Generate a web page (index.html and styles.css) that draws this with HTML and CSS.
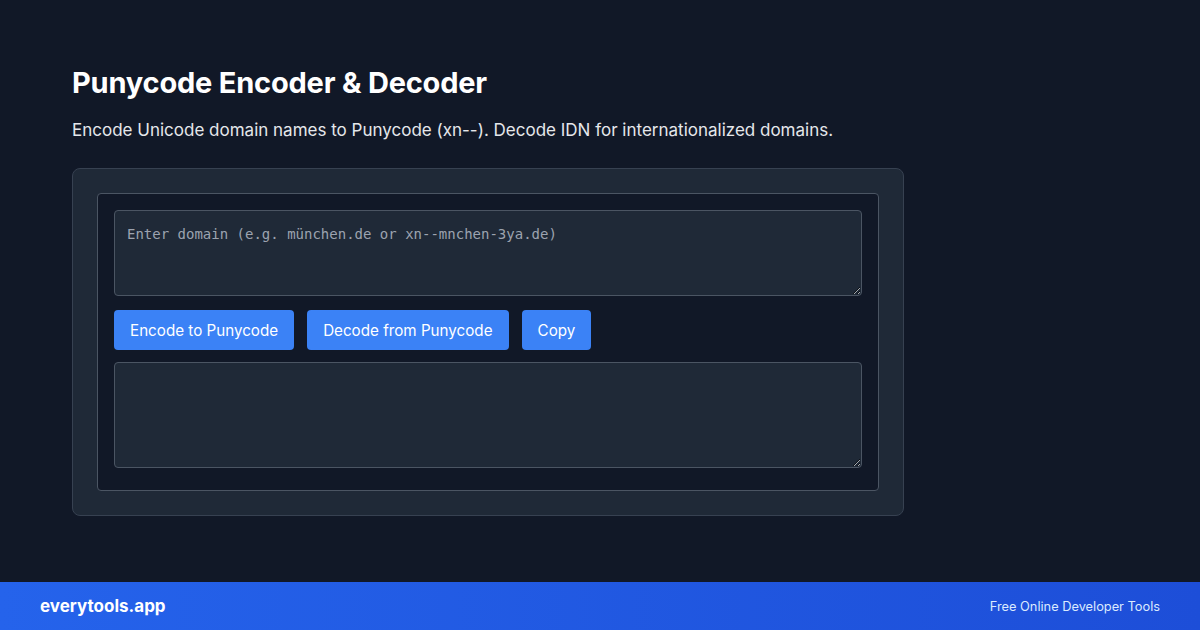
FILE: index.html
```html
<!DOCTYPE html>
<html>
<head>
<meta charset="utf-8">
<link rel="stylesheet" href="styles.css">
</head>
<body>
<div class="page">
  <main class="main">
    <h1 class="title">Punycode Encoder &amp; Decoder</h1>
    <p class="subtitle">Encode Unicode domain names to Punycode (xn--). Decode IDN for internationalized domains.</p>
    <div class="card">
      <div class="panel">
        <textarea class="field field-in" placeholder="Enter domain (e.g. münchen.de or xn--mnchen-3ya.de)"></textarea>
        <div class="actions">
          <button class="btn">Encode to Punycode</button>
          <button class="btn">Decode from Punycode</button>
          <button class="btn">Copy</button>
        </div>
        <textarea class="field field-out"></textarea>
      </div>
    </div>
  </main>
  <footer class="footer">
    <span class="brand">everytools.app</span>
    <span class="tagline">Free Online Developer Tools</span>
  </footer>
</div>
</body>
</html>
```
FILE: styles.css
```css
* { box-sizing: border-box; }
html, body { margin: 0; padding: 0; }
body {
  background: #111827;
  font-family: Inter, "Noto Sans", sans-serif;
  color: #f9fafb;
  width: 1200px;
  height: 630px;
  overflow: hidden;
}
.page {
  height: 630px;
  display: flex;
  flex-direction: column;
}
.main {
  flex: 1;
  padding: 65px 72px 0;
}
.title {
  margin: 0;
  font-size: 29px;
  font-weight: 700;
  line-height: 36px;
  color: #ffffff;
  letter-spacing: -0.2px;
}
.subtitle {
  margin: 17px 0 0;
  font-size: 17px;
  line-height: 24px;
  color: #e5e7eb;
}
.card {
  margin-top: 26px;
  width: 832px;
  background: #1f2937;
  border: 1px solid #374151;
  border-radius: 8px;
  padding: 24px;
}
.panel {
  background: #111827;
  border: 1px solid #4b5563;
  border-radius: 4px;
  padding: 16px 16px 22px;
  display: flex;
  flex-direction: column;
}
.field {
  display: block;
  width: 100%;
  background: #1f2937;
  border: 1px solid #4b5563;
  border-radius: 4px;
  padding: 13px 12px 12px;
  font-family: "DejaVu Sans Mono", monospace;
  font-size: 14px;
  line-height: 20px;
  color: #e5e7eb;
  resize: vertical;
  margin: 0;
  outline: none;
}
.field::placeholder { color: #9ca3af; }
.field-in { height: 86px; }
.field-out { height: 106px; }
.actions {
  display: flex;
  gap: 13px;
  margin: 14px 0 12px;
}
.btn {
  background: #3b82f6;
  color: #ffffff;
  border: none;
  border-radius: 4px;
  height: 40px;
  padding: 0 16px;
  font-family: Inter, "Noto Sans", sans-serif;
  font-size: 15.2px;
}
.footer {
  height: 48px;
  background: linear-gradient(90deg, #2563eb, #1d4ed8);
  display: flex;
  align-items: center;
  justify-content: space-between;
  padding: 0 40px;
}
.brand {
  font-size: 17px;
  font-weight: 700;
  color: #ffffff;
}
.tagline {
  font-size: 12.8px;
  color: #dbeafe;
}
```
